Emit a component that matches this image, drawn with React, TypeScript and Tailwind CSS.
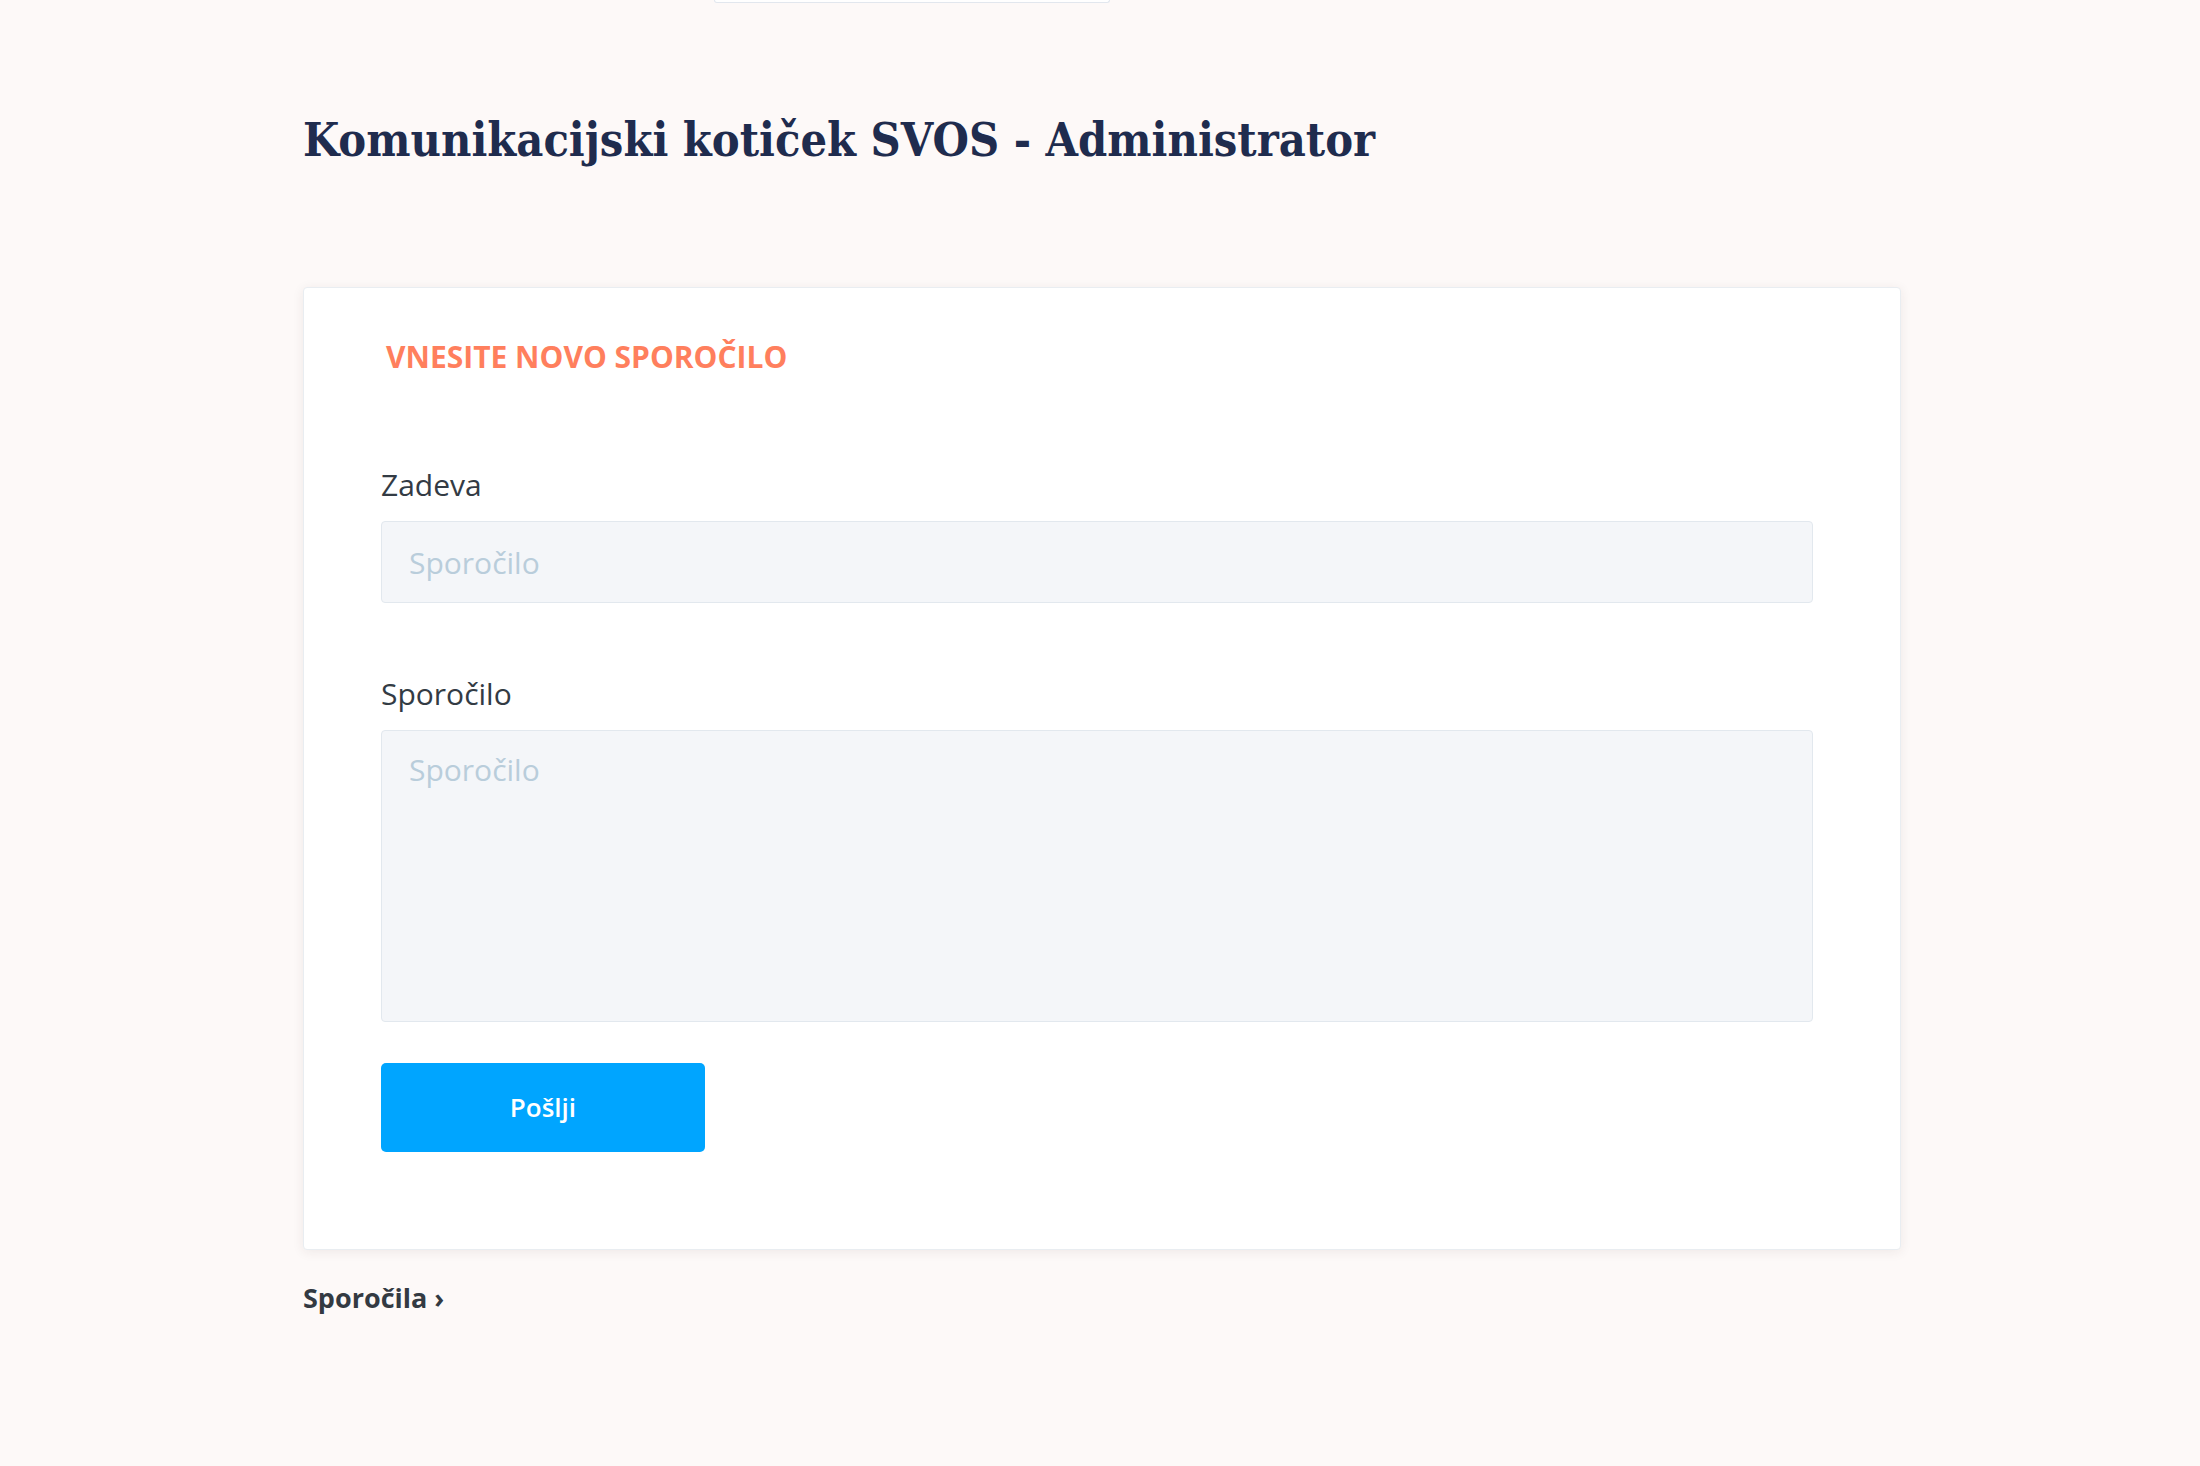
const inputBase =
  "w-full rounded-[4px] border border-[#e2e8ee] bg-[#f4f6f9] px-[27px] text-[30px] text-[#333b44] placeholder:text-[#b9cddb] outline-none"

const App = () => {
  return (
    <div className="min-h-screen bg-[#fdf9f8] font-['Open_Sans',sans-serif] text-[#333b44]">
      {/* header box scrolled out of view */}
      <div className="ml-[714px] h-[3px] w-[396px] rounded-b-[3px] border-x border-b border-[#e2e7ee] bg-white" />

      <div className="ml-[303px] w-[1598px] pb-[150px]">
        <h1 className="mt-[110px] font-['DejaVu_Serif_Condensed','DejaVu_Serif',serif] text-[46.5px] leading-[54px] font-bold text-[#1f2c4e]">
          Komunikacijski kotiček SVOS - Administrator
        </h1>

        <div className="mt-[120px] rounded-[4px] border border-[#e9edf1] bg-white pt-[49px] pr-[87px] pb-[97px] pl-[77px] shadow-[0_2px_12px_rgba(60,40,40,0.08)]">
          <h2 className="pl-[5px] text-[30px] leading-[40px] font-bold text-[#ff7f5d] uppercase">
            Vnesite novo sporočilo
          </h2>

          <form className="mt-[88px] flex flex-col" onSubmit={(e) => e.preventDefault()}>
            <label className="text-[30px] leading-[40px]">Zadeva</label>
            <input
              type="text"
              placeholder="Sporočilo"
              className={`${inputBase} mt-[16px] h-[82px]`}
            />

            <label className="mt-[71px] text-[30px] leading-[40px]">Sporočilo</label>
            <textarea
              placeholder="Sporočilo"
              className={`${inputBase} mt-[16px] h-[292px] resize-none py-[19px] leading-[40px]`}
            />

            <button
              type="submit"
              className="mt-[41px] h-[89px] w-[324px] rounded-[5px] bg-[#00a5ff] text-[26px] font-semibold text-white"
            >
              Pošlji
            </button>
          </form>
        </div>

        <a href="#" className="mt-[28px] inline-block text-[27px] leading-[40px] font-bold text-[#333a42]">
          Sporočila ›
        </a>
      </div>
    </div>
  )
}

export default App
